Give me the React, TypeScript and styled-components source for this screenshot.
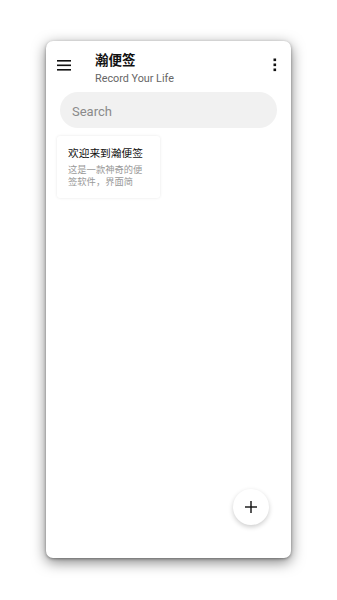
import React from "react";
import styled, { createGlobalStyle } from "styled-components";

const GlobalStyle = createGlobalStyle`
  html, body {
    margin: 0;
    padding: 0;
    background: #ffffff;
    font-family: Roboto, "Noto Sans CJK SC", sans-serif;
  }
`;

const Page = styled.div`
  padding: 41px 0 0 46px;
  width: 337px;
  height: 600px;
  box-sizing: border-box;
`;

const Frame = styled.div`
  position: relative;
  width: 245px;
  height: 517px;
  background: #ffffff;
  border-radius: 7px;
  box-shadow: 0 4px 14px rgba(0, 0, 0, 0.5), 0 1px 3px rgba(0, 0, 0, 0.35);
  display: flex;
  flex-direction: column;
  overflow: hidden;
`;

const Header = styled.div`
  height: 48px;
  display: flex;
  align-items: center;
  padding: 0 14px 0 11px;
`;

const IconButton = styled.div`
  display: flex;
  align-items: center;
  justify-content: center;
  color: #111;
`;

const TitleBlock = styled.div`
  flex: 1;
  margin-left: 23px;
  padding-top: 6px;
  display: flex;
  flex-direction: column;
`;

const Title = styled.div`
  font-family: "Noto Sans CJK SC", sans-serif;
  font-size: 13.5px;
  font-weight: 700;
  line-height: 17px;
  color: #111;
`;

const Subtitle = styled.div`
  margin-top: 4px;
  font-family: Roboto, sans-serif;
  font-size: 10.8px;
  line-height: 13px;
  color: #666;
`;

const SearchBar = styled.div`
  margin: 3px 14px 0 14px;
  height: 36px;
  border-radius: 18px;
  background: #f1f1f1;
  display: flex;
  align-items: center;
  padding: 3px 0 0 12px;
  box-sizing: border-box;
  font-family: Roboto, sans-serif;
  font-size: 13px;
  color: #8a8a8a;
`;

const Grid = styled.div`
  display: flex;
  padding: 8px 11px 0 11px;
`;

const Card = styled.div`
  width: 103px;
  height: 62px;
  box-sizing: border-box;
  padding: 9px 11px 0 11px;
  background: #fff;
  border-radius: 3px;
  box-shadow: 0 0 3px rgba(0, 0, 0, 0.1);
`;

const CardTitle = styled.div`
  font-family: "Noto Sans CJK SC", sans-serif;
  font-size: 10.7px;
  line-height: 15px;
  color: #111;
  white-space: nowrap;
`;

const CardBody = styled.div`
  margin-top: 3px;
  font-family: "Noto Sans CJK SC", sans-serif;
  font-size: 9.3px;
  line-height: 12px;
  color: #999;
  width: 78px;
`;

const Fab = styled.div`
  position: absolute;
  right: 22px;
  bottom: 33px;
  width: 36px;
  height: 36px;
  border-radius: 50%;
  background: #fff;
  box-shadow: 0 2px 5px rgba(0, 0, 0, 0.2);
  display: flex;
  align-items: center;
  justify-content: center;
`;

const Menu = () => (
  <svg width="15" height="12" viewBox="0 0 15 12">
    <rect x="0" y="1" width="14" height="1.6" fill="#111" />
    <rect x="0" y="5.5" width="14" height="1.6" fill="#111" />
    <rect x="0" y="10" width="14" height="1.6" fill="#111" />
  </svg>
);

const Dots = () => (
  <svg width="4" height="14" viewBox="0 0 4 14">
    <rect x="0.5" y="0.5" width="2.6" height="2.6" fill="#111" />
    <rect x="0.5" y="5.5" width="2.6" height="2.6" fill="#111" />
    <rect x="0.5" y="10.5" width="2.6" height="2.6" fill="#111" />
  </svg>
);

const Plus = () => (
  <svg width="12" height="12" viewBox="0 0 12 12">
    <rect x="5.3" y="0" width="1.4" height="12" fill="#111" />
    <rect x="0" y="5.3" width="12" height="1.4" fill="#111" />
  </svg>
);

export default function App() {
  return (
    <>
      <GlobalStyle />
      <Page>
        <Frame>
          <Header>
            <IconButton>
              <Menu />
            </IconButton>
            <TitleBlock>
              <Title>瀚便签</Title>
              <Subtitle>Record Your Life</Subtitle>
            </TitleBlock>
            <IconButton>
              <Dots />
            </IconButton>
          </Header>
          <SearchBar>Search</SearchBar>
          <Grid>
            <Card>
              <CardTitle>欢迎来到瀚便签</CardTitle>
              <CardBody>这是一款神奇的便签软件，界面简</CardBody>
            </Card>
          </Grid>
          <Fab>
            <Plus />
          </Fab>
        </Frame>
      </Page>
    </>
  );
}
